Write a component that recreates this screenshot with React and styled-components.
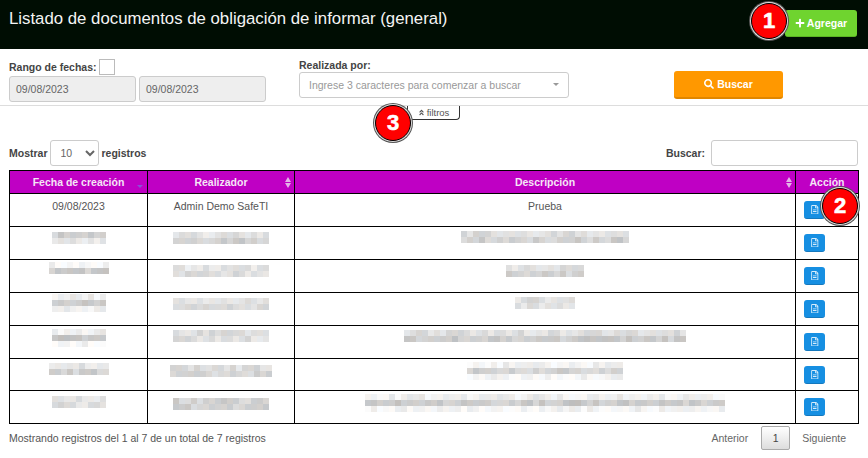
import React from 'react';
import styled, { createGlobalStyle } from 'styled-components';
import { FaPlus, FaSearch, FaRegFileAlt, FaAngleDoubleUp } from 'react-icons/fa';

const Global = createGlobalStyle`
  html, body { margin: 0; padding: 0; background: #fff; }
  body { font-family: "Liberation Sans", Arial, sans-serif; color: #555; overflow: hidden; }
  * { box-sizing: border-box; }
`

const Page = styled.div`
  position: relative;
  width: 868px;
  height: 458px;
  overflow: hidden;
`
const Header = styled.header`
  height: 49px;
  background: #000d03;
  display: flex;
  justify-content: space-between;
  padding: 10px 11px 0 9px;
`
const Title = styled.h1`
  margin: 0;
  font-size: 16.8px;
  line-height: 18px;
  font-weight: 400;
  color: #f4f4f4;
`
const AddButton = styled.button`
  width: 72px;
  height: 27px;
  border: 0;
  border-bottom: 1px solid #5cb324;
  border-radius: 3px;
  background: #6fd42f;
  color: #fff;
  font: 700 10.5px "Liberation Sans", Arial, sans-serif;
  display: flex;
  align-items: center;
  justify-content: center;
  gap: 2px;
  padding: 0;
`
const Filters = styled.section`
  height: 57px;
  border-bottom: 1px solid #ddd;
  display: grid;
  grid-template-columns: 290px 375px 109px;
  padding: 10px 0 0 9px;
`
const Label = styled.label`
  display: flex;
  align-items: center;
  gap: 2px;
  font-size: 10.5px;
  font-weight: 700;
  color: #444;
  height: ${p => p.$h || 14}px;
`
const Check = styled.span`
  width: 16px;
  height: 16px;
  background: #fff;
  border: 1px solid #bbb;
`
const Dates = styled.div`
  display: flex;
  gap: 3px;
  margin-top: 1px;
`
const DateBox = styled.div`
  width: 127px;
  height: 26px;
  background: #eee;
  border: 1px solid #ccc;
  border-radius: 3px;
  font-size: 10.5px;
  color: #666;
  display: flex;
  align-items: center;
  padding-left: 6px;
`
const Combo = styled.div`
  width: 270px;
  height: 26px;
  margin-top: 1px;
  border: 1px solid #ccc;
  border-radius: 3px;
  display: flex;
  align-items: center;
  justify-content: space-between;
  padding: 0 9px 0 9px;
  font-size: 10.5px;
  color: #999;
`
const Caret = styled.span`
  border-left: 3.5px solid transparent;
  border-right: 3.5px solid transparent;
  border-top: 3.5px solid #999;
  margin-top: -2px;
`
const SearchButton = styled.button`
  width: 109px;
  height: 28px;
  margin-top: 12px;
  border: 0;
  border-bottom: 2px solid #e08600;
  border-radius: 3px;
  background: #ff9800;
  color: #fff;
  font: 700 10.5px "Liberation Sans", Arial, sans-serif;
  display: flex;
  align-items: center;
  justify-content: center;
  gap: 3px;
  padding: 0;
`
const TabRow = styled.div`
  display: flex;
  justify-content: center;
  height: 34px;
  padding-right: 1px;
`
const FilterTab = styled.div`
  width: 53px;
  height: 14px;
  border: 1px solid #333;
  border-top: 0;
  border-radius: 0 0 4px 4px;
  font-size: 9.5px;
  color: #555;
  display: flex;
  align-items: center;
  justify-content: center;
  gap: 2px;
`
const Controls = styled.div`
  display: flex;
  justify-content: space-between;
  align-items: center;
  height: 26px;
  padding: 0 10px 0 9px;
`
const ControlLabel = styled.label`
  display: flex;
  align-items: center;
  gap: 3px;
  font-size: 10.5px;
  font-weight: 700;
  color: #444;
`
const PageSize = styled.select`
  width: 49px;
  height: 26px;
  margin-left: -1px;
  border: 1px solid #ccc;
  border-radius: 3px;
  background: #fff;
  font: 10.5px "Liberation Sans", Arial, sans-serif;
  color: #666;
  padding-left: 6px;
`
const SearchInput = styled.input`
  width: 147px;
  height: 26px;
  margin-left: 3px;
  border: 1px solid #ccc;
  border-radius: 3px;
`
const Table = styled.table`
  width: 849px;
  margin: 4px 0 0 9px;
  border-collapse: collapse;
  table-layout: fixed;
`
const Th = styled.th`
  position: relative;
  height: 23px;
  padding: 0;
  background: #bf00c4;
  border: 1px solid #000;
  color: #f5e6f6;
  font-size: 10.5px;
  font-weight: 700;
`
const Sort = styled.span`
  position: absolute;
  right: 3px;
  top: 50%;
  margin-top: -6px;
  width: 7px;
  height: 13px;
  display: flex;
  flex-direction: column;
  justify-content: center;
  gap: 1px;
  align-items: center;
  &::before, &::after {
    content: "";
    border-left: 3px solid transparent;
    border-right: 3px solid transparent;
  }
  &::before { border-bottom: 5px solid #e3b3e8; }
  &::after { border-top: 5px solid #e3b3e8; }
`
const SortDown = styled.span`
  position: absolute;
  right: 4px;
  bottom: 5px;
  border-left: 3px solid transparent;
  border-right: 3px solid transparent;
  border-top: 3px solid #8a4fd8;
`
const Td = styled.td`
  padding: 0 0 0 ${p => p.$pad || 0}px;
  height: ${p => p.$h}px;
  border: 1px solid #000;
  text-align: ${p => (p.$pad ? 'left' : 'center')};
  vertical-align: top;
  font-size: 10.5px;
  color: #555;
`
const CellText = styled.div`
  margin-top: 6px;
  line-height: 12px;
`
const Smudge = styled.div`
  display: grid;
  grid-template-columns: repeat(${p => p.$cols}, 6px);
  grid-auto-rows: 6px;
  justify-content: center;
  margin-top: ${p => p.$top}px;
`
const Dot = styled.span`
  display: block;
`
const DocButton = styled.button`
  width: 21px;
  height: 18px;
  margin-top: 7px;
  border: 0;
  border-bottom: 1px solid #1478bd;
  border-radius: 3px;
  background: #168fe2;
  color: #d5ecfb;
  font-size: 9.5px;
  padding: 0;
  display: inline-flex;
  align-items: center;
  justify-content: center;
`
const Footer = styled.footer`
  display: flex;
  justify-content: space-between;
  align-items: center;
  padding: 2px 22px 0 9px;
  font-size: 10.5px;
`
const Pager = styled.nav`
  display: flex;
  align-items: center;
  gap: 13px;
  color: #666;
`
const PageBtn = styled.span`
  width: 29px;
  height: 24px;
  margin-right: -1px;
  border: 1px solid #aaa;
  border-radius: 2px;
  background: linear-gradient(#fff, #ddd);
  display: flex;
  align-items: center;
  justify-content: center;
  color: #444;
`
const Badge = styled.div`
  position: absolute;
  left: ${p => p.$x - 18}px;
  top: ${p => p.$y - 18}px;
  width: 36px;
  height: 36px;
  border-radius: 50%;
  background: #f00;
  border: 1px solid #000;
  box-shadow: 0 0 0 1px #ddd, 0 0 0 2px #555;
  color: #fff;
  font: 700 22px "Liberation Sans", Arial, sans-serif;
  -webkit-text-stroke: 0.6px #fff;
  display: flex;
  align-items: center;
  justify-content: center;
`

// [columnas, tono de cada franja, y de inicio]
const rows = [
  { h: 33, date: [9, [208, 232], 232], name: [16, [225, 208], 232], desc: [28, [222, 208], 231] },
  { h: 33, date: [10, [245, 205], 262], name: [16, [228, 222], 265], desc: [13, [225, 210], 265] },
  { h: 33, date: [9, [238, 205, 238], 294], name: [16, [228, 218], 298], desc: [10, [222, 225], 297] },
  { h: 33, date: [9, [240, 200, 245], 329], name: [16, [222, 222], 330], desc: [47, [222, 205], 330] },
  { h: 32, date: [10, [230, 210], 363], name: [17, [222, 215], 365], desc: [26, [243, 210, 246], 362] },
  { h: 33, date: [9, [225, 222], 396], name: [16, [210, 210], 398], desc: [60, [238, 203, 243], 394] },
];

// gris pseudoaleatorio para las celdas difuminadas
const tint = (seed, base) => {
  const n = Math.abs(Math.sin(seed * 12.9898) * 43758.5453) % 1;
  const v = Math.min(252, Math.round(base - 13 + n * 26));
  const warm = seed % 3 === 0 ? 3 : seed % 3 === 1 ? -3 : 0;
  return `rgb(${v + warm},${v},${v - warm})`;
};

const Blur = ({ spec, rowTop, seed }) => {
  const [cols, tones, y] = spec;
  const cells = [];
  tones.forEach((tone, l) => {
    for (let c = 0; c < cols; c++) cells.push({ key: l * 100 + c, color: tint(seed + l * 37 + c, tone) });
  });
  return (
    <Smudge $cols={cols} $top={y - rowTop}>
      {cells.map(cell => (
        <Dot key={cell.key} style={{ background: cell.color }} />
      ))}
    </Smudge>
  );
};

const Doc = () => (
  <DocButton><FaRegFileAlt /></DocButton>
);

export default function App() {
  let rowTop = 227;
  return (
    <Page>
      <Global />
      <Header>
        <Title>Listado de documentos de obligación de informar (general)</Title>
        <AddButton><FaPlus size={10} /> Agregar</AddButton>
      </Header>
      <Filters>
        <div>
          <Label $h={16}>Rango de fechas: <Check /></Label>
          <Dates>
            <DateBox>09/08/2023</DateBox>
            <DateBox>09/08/2023</DateBox>
          </Dates>
        </div>
        <div>
          <Label $h={12}>Realizada por:</Label>
          <Combo>Ingrese 3 caracteres para comenzar a buscar<Caret /></Combo>
        </div>
        <SearchButton><FaSearch size={10} /> Buscar</SearchButton>
      </Filters>
      <TabRow>
        <FilterTab><FaAngleDoubleUp size={7} /> filtros</FilterTab>
      </TabRow>
      <Controls>
        <ControlLabel>
          Mostrar
          <PageSize defaultValue="10">
            <option>10</option>
            <option>25</option>
            <option>50</option>
          </PageSize>
          registros
        </ControlLabel>
        <ControlLabel>Buscar: <SearchInput /></ControlLabel>
      </Controls>
      <Table>
        <colgroup>
          <col style={{ width: 138 }} />
          <col style={{ width: 147 }} />
          <col style={{ width: 501 }} />
          <col style={{ width: 63 }} />
        </colgroup>
        <thead>
          <tr>
            <Th>Fecha de creación<SortDown /></Th>
            <Th>Realizador<Sort /></Th>
            <Th>Descripción<Sort /></Th>
            <Th>Acción</Th>
          </tr>
        </thead>
        <tbody>
          <tr>
            <Td $h={33}><CellText>09/08/2023</CellText></Td>
            <Td $h={33}><CellText>Admin Demo SafeTI</CellText></Td>
            <Td $h={33}><CellText>Prueba</CellText></Td>
            <Td $h={33} $pad={8}><Doc /></Td>
          </tr>
          {rows.map((r, i) => {
            const top = rowTop;
            rowTop += r.h;
            return (
              <tr key={i}>
                <Td $h={r.h}><Blur spec={r.date} rowTop={top} seed={i * 100 + 1} /></Td>
                <Td $h={r.h}><Blur spec={r.name} rowTop={top} seed={i * 100 + 31} /></Td>
                <Td $h={r.h}><Blur spec={r.desc} rowTop={top} seed={i * 100 + 61} /></Td>
                <Td $h={r.h} $pad={8}><Doc /></Td>
              </tr>
            );
          })}
        </tbody>
      </Table>
      <Footer>
        <span>Mostrando registros del 1 al 7 de un total de 7 registros</span>
        <Pager>
          <span>Anterior</span>
          <PageBtn>1</PageBtn>
          <span>Siguiente</span>
        </Pager>
      </Footer>
      <Badge $x={769} $y={21}>1</Badge>
      <Badge $x={840} $y={206}>2</Badge>
      <Badge $x={393} $y={123}>3</Badge>
    </Page>
  );
}
